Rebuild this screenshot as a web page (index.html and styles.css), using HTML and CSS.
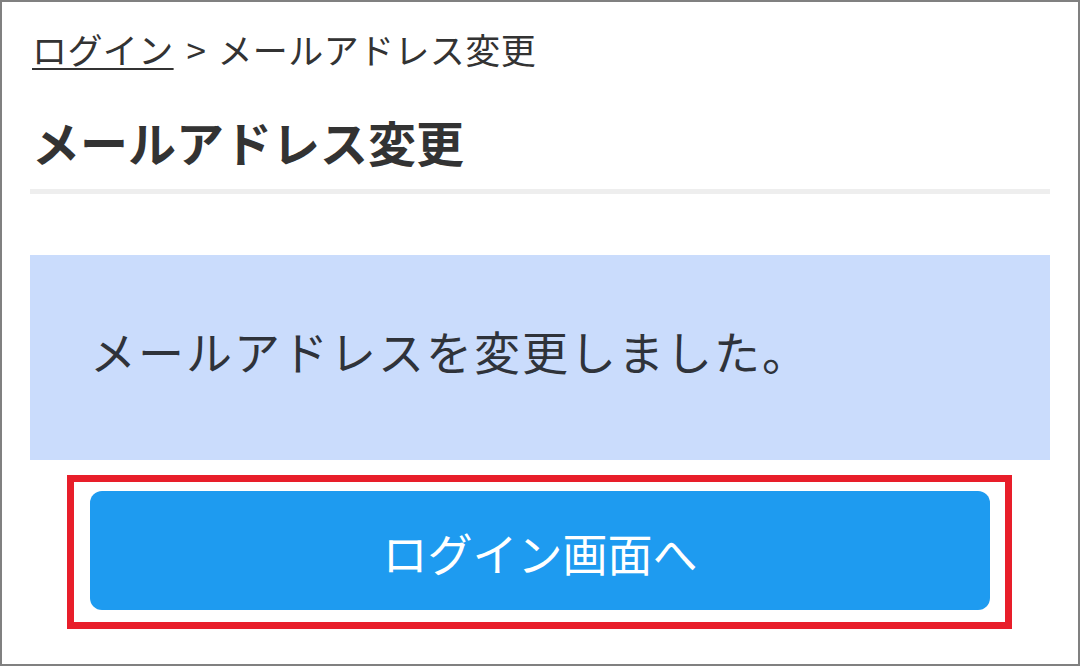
FILE: index.html
```html
<!DOCTYPE html>
<html lang="ja">
<head>
<meta charset="utf-8">
<title>メールアドレス変更</title>
<link rel="stylesheet" href="styles.css">
</head>
<body>
<div class="frame">
  <nav class="crumbs"><a class="crumb-link" href="#">ログイン</a><span class="sep">&gt;</span>メールアドレス変更</nav>
  <h1 class="title">メールアドレス変更</h1>
  <div class="notice">メールアドレスを変更しました。</div>
  <div class="highlight">
    <a class="btn" href="#">ログイン画面へ</a>
  </div>
</div>
</body>
</html>
```

FILE: styles.css
```css
html, body {
  margin: 0;
  padding: 0;
  background: #fff;
}
* { box-sizing: border-box; }
.frame {
  width: 1080px;
  height: 666px;
  border: 2px solid #808080;
  padding: 21px 28px 0 28px;
  font-family: "Noto Sans CJK JP", "Noto Sans", sans-serif;
  color: #333;
  overflow: hidden;
}
.crumbs {
  font-size: 35px;
  line-height: 52px;
  padding-left: 2px;
  letter-spacing: 0.4px;
}
.crumb-link {
  color: #333;
  text-decoration: underline;
  text-decoration-thickness: 2px;
  text-underline-offset: 4px;
}
.sep {
  margin: 0 11px 0 13px;
}
.title {
  margin: 34px 0 0 0;
  padding: 0 0 16px 2px;
  font-size: 48px;
  line-height: 64px;
  font-weight: 700;
  border-bottom: 5px solid #eeeeee;
}
.notice {
  margin-top: 61px;
  height: 205px;
  background: #cadcfc;
  display: flex;
  align-items: center;
  padding-left: 60px;
  padding-bottom: 16px;
  font-size: 46px;
  letter-spacing: 2px;
  color: #2f333a;
}
.highlight {
  margin: 15px 38px 0 37px;
  height: 154px;
  border: 7px solid #e81e2a;
  padding: 9px 15px 12px 16px;
}
.btn {
  display: flex;
  align-items: center;
  justify-content: center;
  height: 119px;
  padding-top: 4px;
  background: #1e9bf0;
  border-radius: 12px;
  color: #fff;
  text-decoration: none;
  font-size: 45px;
}
```
